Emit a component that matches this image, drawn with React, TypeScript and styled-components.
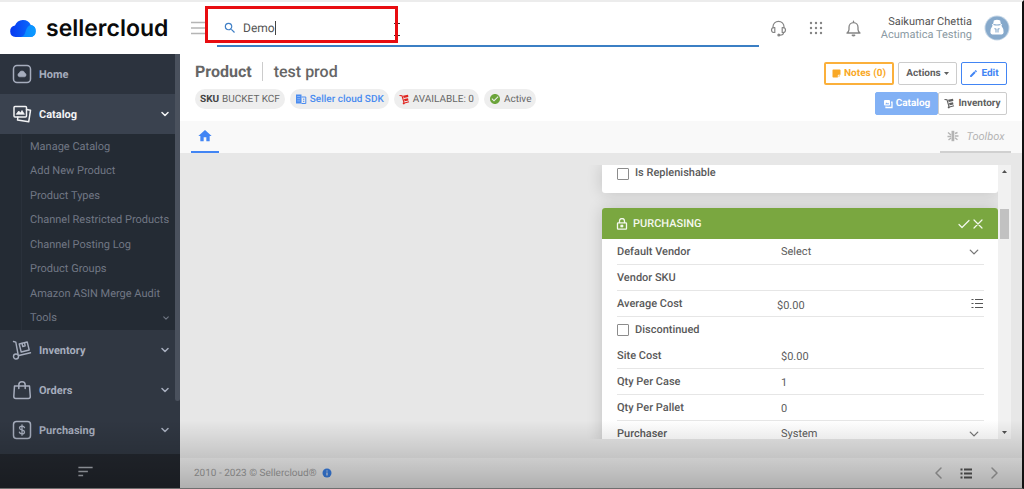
import React from "react";
import styled, { createGlobalStyle, css } from "styled-components";
import {
  MdSearch,
  MdHome,
  MdCheckCircle,
  MdEdit,
  MdSort,
} from "react-icons/md";

const GlobalStyle = createGlobalStyle`
  *, *::before, *::after { box-sizing: border-box; }
  body {
    margin: 0;
    background: #fff;
    font-family: Roboto, "Liberation Sans", sans-serif;
    font-size: 11px;
    color: #5c5c5c;
    text-rendering: geometricPrecision;
  }
  button, input, select { font: inherit; color: inherit; text-rendering: inherit; }
  svg { display: block; flex: none; }
`;

/* ---------- shell ---------- */

const Shell = styled.div`
  position: relative;
  display: flex;
  flex-direction: column;
  height: 100vh;
  overflow: hidden;
  border-top: 2px solid #ececec;
  border-right: 2px solid #111;
  border-bottom: 1px solid #6f6f6f;
`;

const Body = styled.div`
  display: flex;
  flex: 1;
  min-height: 0;
`;

const BottomShade = styled.div`
  position: absolute;
  left: 0;
  right: 0;
  bottom: 0;
  height: 68px;
  pointer-events: none;
  background: linear-gradient(rgba(0, 0, 0, 0), rgba(0, 0, 0, 0.27));
`;

/* ---------- top bar ---------- */

const TopBar = styled.header`
  display: flex;
  flex: none;
  align-items: center;
  height: 52px;
  padding-right: 12px;
`;

const Brand = styled.a`
  display: flex;
  align-items: center;
  gap: 9px;
  width: 191px;
  padding-left: 9px;
  color: #0b0b0b;
  font: 600 23px/28px Inter, "Liberation Sans", sans-serif;
  text-decoration: none;
`;

const IconButton = styled.button`
  display: flex;
  align-items: center;
  justify-content: center;
  padding: 0;
  border: 0;
  background: none;
  color: inherit;
`;

const SearchBox = styled.label`
  position: relative;
  display: flex;
  flex: 1;
  align-items: center;
  gap: 6px;
  height: 45px;
  margin: 0 11px 0 10px;
  padding: 8px 0 0 6px;
  border-bottom: 2px solid #3b7fc4;
  align-self: flex-start;
  color: #3f7fc6;
`;

const SearchInput = styled.input`
  field-sizing: content;
  height: 14px;
  padding: 0;
  border: 0;
  border-right: 1px solid #444;
  outline: 0;
  background: none;
  color: #555;
  font-size: 12px;
`;

const SearchHighlight = styled.div`
  position: absolute;
  top: 4px;
  left: -12px;
  width: 193px;
  height: 37px;
  border: 3px solid #e80c10;
  pointer-events: none;
`;

const TextCursor = styled.svg`
  position: absolute;
  top: 21px;
  left: 177px;
`;

const TopActions = styled.div`
  display: flex;
  align-items: center;
  gap: 22px;
  color: #858585;
`;

const Account = styled.div`
  display: flex;
  align-items: center;
  gap: 12px;
  padding-left: 19px;
`;

const AccountName = styled.div`
  color: #555;
  line-height: 13px;
  text-align: right;
`;

const AccountOrg = styled.div`
  color: #8b9aa3;
`;

/* ---------- side bar ---------- */

const SideBar = styled.nav`
  position: relative;
  display: flex;
  flex: none;
  flex-direction: column;
  width: 180px;
  background: #303742;
`;

const SideScroll = styled.div`
  flex: 1;
  min-height: 0;
  overflow: hidden;
`;

const SideThumb = styled.div`
  position: absolute;
  top: 0;
  right: 0;
  width: 5px;
  height: 347px;
  border-radius: 0 0 3px 3px;
  background: #4a515d;
`;

const SideItem = styled.a<{ $open?: boolean; $first?: boolean }>`
  display: flex;
  align-items: center;
  gap: 7px;
  height: 40px;
  padding: 0 11px 0 12px;
  background: ${(p) => (p.$open ? "#3a424f" : p.$first ? "#2c333e" : "transparent")};
  color: ${(p) => (p.$open ? "#f2f3f5" : "#a6adbd")};
  font-size: 11px;
  font-weight: 700;
  text-decoration: none;
`;

const SideLabel = styled.span`
  flex: 1;
`;

const SubMenu = styled.div`
  display: grid;
  grid-auto-rows: 1fr;
  height: 196px;
  padding: 0 11px 0 30px;
  background: linear-gradient(90deg, #242b34 21px, #2a313b 21px, #2a313b 22px, #242b34 22px);
`;

const SubItem = styled.a`
  display: flex;
  align-items: center;
  justify-content: space-between;
  color: #717784;
  white-space: nowrap;
  text-decoration: none;
`;

const SideFooter = styled.button`
  display: flex;
  flex: none;
  align-items: center;
  justify-content: center;
  height: 34px;
  padding: 0 10px 0 0;
  border: 0;
  background: #23272e;
  color: #a7abb3;
`;

/* ---------- page header ---------- */

const Main = styled.main`
  display: flex;
  flex: 1;
  flex-direction: column;
  min-width: 0;
  background: #e7e7e7;
`;

const PageHead = styled.div`
  display: flex;
  justify-content: space-between;
  padding: 8px 15px 6px;
  background: #fff;
`;

const Stack = styled.div<{ $end?: boolean }>`
  display: flex;
  flex-direction: column;
  align-items: ${(p) => (p.$end ? "flex-end" : "flex-start")};
  gap: ${(p) => (p.$end ? 7 : 8)}px;
`;

const Title = styled.h1`
  display: flex;
  align-items: center;
  margin: 0;
  color: #666;
  font-size: 16px;
  font-weight: 700;
  line-height: 19px;
`;

const TitleName = styled.span`
  margin-left: 10px;
  padding-left: 11px;
  border-left: 1px solid #ccc;
  font-weight: 500;
`;

const PillRow = styled.div`
  display: flex;
  gap: 5px;
`;

const Pill = styled.span<{ $link?: boolean }>`
  display: flex;
  align-items: center;
  gap: 3px;
  height: 20px;
  padding: 0 5px;
  border-radius: 10px;
  background: #eee;
  color: ${(p) => (p.$link ? "#4a8cf0" : "#666")};
  font-size: 10px;
  font-weight: ${(p) => (p.$link ? 500 : 400)};
  white-space: nowrap;

  b {
    color: #444;
  }
`;

const ButtonRow = styled.div<{ $joined?: boolean }>`
  display: flex;
  gap: ${(p) => (p.$joined ? 0 : 4)}px;
`;

const tones = {
  amber: css`
    border: 2px solid #fbb03b;
    background: #fff;
    color: #f9a825;
  `,
  plain: css`
    border: 1px solid #ccc;
    background: #fff;
    color: #5f5f5f;
  `,
  blue: css`
    border: 1px solid #4285f4;
    background: #fff;
    color: #4285f4;
  `,
  filled: css`
    border: 1px solid #82b1f5;
    background: #82b1f5;
    color: #fff;
  `,
};

const Button = styled.button<{ $tone: keyof typeof tones; $width: number }>`
  display: flex;
  align-items: center;
  justify-content: center;
  gap: 3px;
  min-width: ${(p) => p.$width}px;
  height: 23px;
  padding: 0;
  border-radius: 2px;
  font-size: 10px;
  font-weight: 700;
  white-space: nowrap;
  ${(p) => tones[p.$tone]}
`;

const TabBar = styled.div`
  display: flex;
  justify-content: space-between;
  height: 32px;
  padding: 0 11px;
  background: #f9f9f9;
`;

const Tab = styled.button<{ $active?: boolean }>`
  display: flex;
  align-items: center;
  justify-content: center;
  gap: 8px;
  min-width: ${(p) => (p.$active ? 28 : 71)}px;
  padding: 0;
  border: 0;
  border-bottom: 2px solid ${(p) => (p.$active ? "#4285f4" : "#d0d0d0")};
  background: none;
  color: ${(p) => (p.$active ? "#4285f4" : "#b4b4b4")};
  font-style: italic;
`;

/* ---------- content ---------- */

const Content = styled.div`
  display: grid;
  grid-template-columns: 1fr 1fr;
  grid-template-rows: minmax(0, 1fr);
  flex: 1;
  min-height: 0;
  padding: 12px 11px 19px 13px;
`;

const ScrollPane = styled.div`
  display: flex;
  grid-column: 2;
  margin-left: -16px;
  padding-left: 16px;
  overflow: hidden;
`;

const Cards = styled.div`
  display: flex;
  flex: 1;
  flex-direction: column;
  gap: 15px;
`;

const Card = styled.section<{ $tail?: boolean }>`
  flex: none;
  padding-bottom: ${(p) => (p.$tail ? 13 : 0)}px;
  border-radius: ${(p) => (p.$tail ? "0 0 3px 3px" : "3px")};
  background: #fff;
  box-shadow: 0 0 16px rgba(0, 0, 0, 0.16);
`;

const CardHead = styled.header`
  display: flex;
  align-items: center;
  gap: 5px;
  height: 31px;
  padding: 0 14px;
  border-radius: 3px 3px 0 0;
  background: #7aa740;
  color: #f4f8ee;
`;

const CardTitle = styled.h2`
  flex: 1;
  margin: 0;
  font-size: 11px;
  font-weight: 500;
`;

const CardTools = styled.div`
  display: flex;
  gap: 2px;
`;

const Row = styled.div`
  display: flex;
  align-items: center;
  height: 26px;
  margin: 0 14px 0 15px;
  border-bottom: 1px solid #e6e6e6;
`;

const Label = styled.label`
  width: 164px;
  color: #595959;
  font-weight: 500;
`;

const ValueInput = styled.input<{ $pulled?: boolean }>`
  flex: 1;
  min-width: 0;
  height: 25px;
  margin-left: ${(p) => (p.$pulled ? -4 : 0)}px;
  padding: ${(p) => (p.$pulled ? 4 : 2)}px 0 0;
  border: 0;
  outline: 0;
  background: none;
`;

const ValueSelect = styled.select`
  flex: 1;
  min-width: 0;
  height: 25px;
  padding: 0;
  border: 0;
  appearance: none;
  background: none;
`;

const SelectMark = styled.span`
  padding-right: 5px;
  color: #777;
`;

const CheckRow = styled.label<{ $short?: boolean }>`
  display: flex;
  align-items: center;
  gap: 6px;
  height: ${(p) => (p.$short ? 15 : 26)}px;
  margin: 0 15px;
  padding-bottom: ${(p) => (p.$short ? 0 : 2)}px;
  color: #595959;
  font-weight: 500;
`;

const CheckBox = styled.input`
  width: 12px;
  height: 12px;
  margin: 2px 0 0;
  border: 1px solid #8c8c8c;
  border-radius: 1px;
  appearance: none;
  background: #fff;
`;

const Scrollbar = styled.div`
  display: flex;
  flex-direction: column;
  justify-content: space-between;
  align-items: center;
  width: 13px;
  padding: 5px 0;
  background: #f1f1f1;
  color: #505050;
`;

const ScrollThumb = styled.div`
  width: 9px;
  height: 30px;
  margin: 36px 0 auto;
  background: #c1c1c1;
`;

const Footer = styled.footer`
  display: flex;
  flex: none;
  align-items: center;
  gap: 5px;
  height: 30px;
  padding: 0 22px 0 14px;
  background: #f1f1f1;
  color: #a3a3a3;
  font-size: 10px;
`;

const Pager = styled.div`
  display: flex;
  align-items: center;
  gap: 15px;
  margin-left: auto;
`;

/* ---------- icons ---------- */

const Line = ({
  size,
  box = 20,
  width = 1.5,
  children,
}: {
  size: number;
  box?: number;
  width?: number;
  children: React.ReactNode;
}) => (
  <svg
    width={size}
    height={size}
    viewBox={`0 0 ${box} ${box}`}
    fill="none"
    stroke="currentColor"
    strokeWidth={width}
    strokeLinecap="round"
    strokeLinejoin="round"
    aria-hidden="true"
  >
    {children}
  </svg>
);

const CloudLogo = () => (
  <svg width="28" height="19" viewBox="0 0 28 19" aria-hidden="true">
    <defs>
      <linearGradient id="cloudBack" x1="0" x2="1">
        <stop offset="0" stopColor="#0838f0" />
        <stop offset="1" stopColor="#0a74ff" />
      </linearGradient>
      <linearGradient id="cloudFront" x1="0" x2="1">
        <stop offset="0" stopColor="#0a84ff" />
        <stop offset="1" stopColor="#0c9bff" />
      </linearGradient>
    </defs>
    <path d="M6.500 18a5.800 5.800 0 0 1-.5-11.500A8.600 8.600 0 0 1 21.800 6 6.100 6.100 0 0 1 21.500 18z" fill="url(#cloudBack)" />
    <path d="M12 18c3.200-.8 4-3.200 4.800-6.200.9-3.400 3-5.400 5-5.800A6.100 6.100 0 0 1 21.500 18z" fill="url(#cloudFront)" />
  </svg>
);

const Chevron = ({ size = 8 }: { size?: number }) => (
  <Line size={size} box={8} width={size > 8 ? 1.1 : 1.5}>
    <path d="M1 2.500l3 3 3-3" />
  </Line>
);

const HomeIcon = () => (
  <Line size={20}>
    <rect x="1.500" y="1.500" width="17" height="17" rx="3.500" />
    <path d="M7.200 12.700a1.900 1.900 0 0 1 0-3.600 2.900 2.900 0 0 1 5.600 0 1.900 1.900 0 0 1 0 3.600z" fill="currentColor" strokeWidth="0.600" />
  </Line>
);

const CatalogIcon = () => (
  <Line size={20}>
    <rect x="2" y="2.500" width="12.500" height="10.500" rx="1" />
    <path d="M4.500 10l2.200-3 1.800 2 1.500-2.500 2.200 3.500z" fill="currentColor" strokeWidth="0.800" />
    <path d="M14.500 5.500l4 .8-1.800 11.500L5.500 16l.4-3" />
  </Line>
);

const InventoryIcon = () => (
  <Line size={20} width={1.4}>
    <path d="M1.500 1.500l2.300.7L6 14M6.800 15.500l11.700-2.700" />
    <circle cx="4" cy="16.500" r="2.500" />
    <path d="M7.200 4l8-2 2 8-8 2z" />
    <path d="M10 3.500l.8 3 2.400-.6-.7-3" />
  </Line>
);

const OrdersIcon = () => (
  <Line size={20}>
    <path d="M2.500 6h15l.8 10.500a2 2 0 0 1-2 2H3.800a2 2 0 0 1-2-2z" />
    <path d="M6.800 8.500V5a3.200 3.200 0 0 1 6.400 0v3.500" />
  </Line>
);

const PurchasingIcon = () => (
  <Line size={20}>
    <rect x="1.500" y="1.500" width="17" height="17" rx="3" />
    <path d="M12.500 7.700c-.3-1-1.300-1.500-2.500-1.500s-2.500.6-2.500 1.900c0 2.600 5 1.200 5 3.800 0 1.300-1.200 1.900-2.500 1.900s-2.300-.6-2.600-1.600M10 4.800v10.400" strokeWidth="1.300" />
  </Line>
);

const HeadsetIcon = () => (
  <Line size={17} box={17} width={1.200}>
    <path d="M3 8V6.800a5.500 5.500 0 0 1 11 0V8" />
    <path d="M4.800 7.500v5H4a2.500 2.500 0 0 1 0-5zM12.200 7.500v5h.8a2.500 2.500 0 0 0 0-5z" />
    <path d="M13.500 12.500c0 2-1.500 2.700-3.700 2.700" />
    <circle cx="8.800" cy="15" r="0.900" fill="currentColor" />
  </Line>
);

const AppsIcon = () => (
  <svg width="14" height="14" viewBox="0 0 14 14" fill="currentColor" aria-hidden="true">
    {[2, 7, 12].map((y) => [2, 7, 12].map((x) => <circle key={`${x}-${y}`} cx={x} cy={y} r="1.200" />))}
  </svg>
);

const BellIcon = () => (
  <Line size={17} box={17} width={1.300}>
    <path d="M2 13h13c-1.300-1-2-2-2-3.500V7.200a4.500 4.500 0 0 0-9 0v2.300C4 11 3.300 12 2 13zM8.500 2.500V1.200" />
    <path d="M7.200 15.200a1.500 1.500 0 0 0 2.600 0z" fill="currentColor" />
  </Line>
);

const Avatar = () => (
  <svg width="26" height="26" viewBox="0 0 26 26" aria-label="Profile picture">
    <circle cx="13" cy="13" r="12.500" fill="#c5d6e6" />
    <circle cx="13" cy="13" r="11.500" fill="#86a9cb" />
    <path d="M9.800 5.500q3.200-1.500 6.400 0l.6 3.300 1.400.7-.8 1.300q2.300 2.500 2.200 6.700-.3 2-2 2H8.400q-1.700 0-2-2-.1-4.200 2.200-6.700l-.8-1.300 1.400-.7z" fill="#fff" />
    <path d="M9.500 9.500q3.500 1 7 0M10.500 13.500l1.500.7v3.300M15.500 13.500l-1.500.7v3.300" stroke="#86a9cb" strokeWidth="1.100" fill="none" />
  </svg>
);

const BuildingIcon = () => (
  <svg width="12" height="12" viewBox="0 0 12 12" aria-hidden="true">
    <path d="M1 1.500h5.500v9H1z" fill="#4a8cf0" />
    <path d="M2.200 3.500h3M2.200 5.700h3M2.200 7.900h3" stroke="#a9c9fa" strokeWidth="0.700" />
    <path d="M6.500 4h4.300v6.500H6.500M8 6.200h1.300M8 8.300h1.300" stroke="#4a8cf0" fill="none" />
  </svg>
);

const NoteIcon = () => (
  <svg width="9" height="9" viewBox="0 0 9 9" fill="currentColor" aria-hidden="true">
    <path d="M1.200.5h6.600q.7 0 .7.700v4.600H6.500q-.7 0-.7.700v2H1.200q-.7 0-.7-.7V1.200q0-.7.700-.7zM6.600 8.300V6.600h1.700z" />
  </svg>
);

const InfoIcon = () => (
  <svg width="10" height="10" viewBox="0 0 10 10" aria-hidden="true">
    <circle cx="5" cy="5" r="4.500" fill="#3b82e8" />
    <path d="M5 4.500v3M5 2.400v1.200" stroke="#e4ecf6" strokeWidth="1.200" />
  </svg>
);

const TrolleyIcon = ({ color = "currentColor" }: { color?: string }) => (
  <svg width="11" height="11" viewBox="0 0 11 11" aria-hidden="true">
    <path d="M.5 1.500l2.500.3 2 6.700M5.500 9L10 7.800" stroke={color} strokeWidth="1.100" fill="none" />
    <path d="M4 1.800l5-1 .4 2.200-4.700 1zM5 5l4-.8.5 2.200-3.900.9z" fill={color} />
    <circle cx="4.800" cy="9.300" r="1.100" fill={color} />
  </svg>
);

const CopiesIcon = () => (
  <svg width="10" height="10" viewBox="0 0 10 10" aria-hidden="true">
    <rect x="1" y="1" width="6" height="5.500" rx="1" fill="currentColor" />
    <path d="M8 3.200h1v5.300H3V7.500" stroke="currentColor" strokeWidth="1.300" fill="none" />
    <path d="M2.200 5.300l1.300-1.800 1 1 .8-.8.800 1.600z" fill="#82b1f5" />
  </svg>
);

const ToolboxIcon = () => (
  <svg width="12" height="12" viewBox="0 0 12 12" aria-hidden="true">
    <path d="M4.500.8h2.800v10.400H4.500z" fill="currentColor" />
    <path d="M1 2.500l3 2.500M.5 6.500h3.500M1.500 10L4 8M8 3.500l2.500-1M8 6h3.500M8 7.800l2.500 2" stroke="currentColor" strokeWidth="1.400" fill="none" />
  </svg>
);

const LockIcon = () => (
  <Line size={12} box={12} width={1.300}>
    <rect x="1.500" y="4.800" width="9" height="6.400" rx="0.600" />
    <path d="M3.500 4.500V3a2.500 2.500 0 0 1 5 0v1.500" />
    <rect x="5" y="7" width="2" height="2" fill="currentColor" strokeWidth="0.600" />
  </Line>
);

const ListIcon = ({ bold }: { bold?: boolean }) => (
  <svg width="13" height="11" viewBox="0 0 13 11" stroke="#555" aria-hidden="true">
    <path
      d="M0.500 1.500h2M4 1.500H12M0.500 5.500h2M4 5.500H12M0.500 9.500h2M4 9.500H12"
      strokeWidth={bold ? 2 : 1.200}
    />
  </svg>
);

const Triangle = ({ down }: { down?: boolean }) => (
  <svg width="5" height="3" viewBox="0 0 5 3" fill="currentColor" aria-hidden="true">
    <path d={down ? "M0 0h5L2.500 3z" : "M0 3h5L2.500 0z"} />
  </svg>
);

/* ---------- data ---------- */

const catalogLinks = [
  "Manage Catalog",
  "Add New Product",
  "Product Types",
  "Channel Restricted Products",
  "Channel Posting Log",
  "Product Groups",
  "Amazon ASIN Merge Audit",
];

const lowerSections = [
  { label: "Inventory", icon: <InventoryIcon /> },
  { label: "Orders", icon: <OrdersIcon /> },
  { label: "Purchasing", icon: <PurchasingIcon /> },
];

const SelectRow = ({ id, label, value }: { id: string; label: string; value: string }) => (
  <Row>
    <Label htmlFor={id}>{label}</Label>
    <ValueSelect id={id} defaultValue={value}>
      <option>{value}</option>
    </ValueSelect>
    <SelectMark>
      <Chevron size={10} />
    </SelectMark>
  </Row>
);

const InputRow = ({
  id,
  label,
  value,
  pulled,
  children,
}: {
  id: string;
  label: string;
  value: string;
  pulled?: boolean;
  children?: React.ReactNode;
}) => (
  <Row>
    <Label htmlFor={id}>{label}</Label>
    <ValueInput id={id} defaultValue={value} $pulled={pulled} />
    {children}
  </Row>
);

export default function App() {
  return (
    <Shell>
      <GlobalStyle />
      <TopBar>
        <Brand href="#">
          <CloudLogo />
          sellercloud
        </Brand>
        <IconButton aria-label="Toggle menu">
          <svg width="16" height="14" viewBox="0 0 16 14" stroke="#b5b5b5" strokeWidth="1.500" aria-hidden="true">
            <path d="M0 1.500h16M0 7h16M0 12.500h16" />
          </svg>
        </IconButton>
        <SearchBox>
          <MdSearch size={14} />
          <SearchInput aria-label="Search" defaultValue="Demo" />
          <TextCursor width="6" height="13" viewBox="0 0 6 13" stroke="#333" fill="none" aria-hidden="true">
            <path d="M0 .5h6M0 12.500h6M3 .5v12" />
          </TextCursor>
          <SearchHighlight />
        </SearchBox>
        <TopActions>
          <IconButton aria-label="Support">
            <HeadsetIcon />
          </IconButton>
          <IconButton aria-label="Apps">
            <AppsIcon />
          </IconButton>
          <IconButton aria-label="Notifications">
            <BellIcon />
          </IconButton>
        </TopActions>
        <Account>
          <AccountName>
            Saikumar Chettia
            <AccountOrg>Acumatica Testing</AccountOrg>
          </AccountName>
          <Avatar />
        </Account>
      </TopBar>

      <Body>
        <SideBar>
          <SideScroll>
            <SideItem href="#" $first>
              <HomeIcon />
              <SideLabel>Home</SideLabel>
            </SideItem>
            <SideItem href="#" $open>
              <CatalogIcon />
              <SideLabel>Catalog</SideLabel>
              <Chevron />
            </SideItem>
            <SubMenu>
              {catalogLinks.map((text) => (
                <SubItem href="#" key={text}>
                  {text}
                </SubItem>
              ))}
              <SubItem href="#">
                Tools
                <Chevron size={6} />
              </SubItem>
            </SubMenu>
            {lowerSections.map((s) => (
              <SideItem href="#" key={s.label}>
                {s.icon}
                <SideLabel>{s.label}</SideLabel>
                <Chevron />
              </SideItem>
            ))}
          </SideScroll>
          <SideFooter aria-label="Collapse menu">
            <MdSort size={19} />
          </SideFooter>
          <SideThumb />
        </SideBar>

        <Main>
          <PageHead>
            <Stack>
              <Title>
                Product
                <TitleName>test prod</TitleName>
              </Title>
              <PillRow>
                <Pill>
                  <b>SKU</b>BUCKET KCF
                </Pill>
                <Pill $link>
                  <BuildingIcon />
                  Seller cloud SDK
                </Pill>
                <Pill>
                  <TrolleyIcon color="#e0241f" />
                  AVAILABLE: 0
                </Pill>
                <Pill>
                  <MdCheckCircle size={12} color="#6ba43a" />
                  Active
                </Pill>
              </PillRow>
            </Stack>
            <Stack $end>
              <ButtonRow>
                <Button $tone="amber" $width={70}>
                  <NoteIcon />
                  Notes (0)
                </Button>
                <Button $tone="plain" $width={59}>
                  Actions
                  <Triangle down />
                </Button>
                <Button $tone="blue" $width={46}>
                  <MdEdit size={9} />
                  Edit
                </Button>
              </ButtonRow>
              <ButtonRow $joined>
                <Button $tone="filled" $width={63}>
                  <CopiesIcon />
                  Catalog
                </Button>
                <Button $tone="plain" $width={69}>
                  <TrolleyIcon />
                  Inventory
                </Button>
              </ButtonRow>
            </Stack>
          </PageHead>

          <TabBar>
            <Tab $active aria-label="Overview">
              <MdHome size={16} />
            </Tab>
            <Tab>
              <ToolboxIcon />
              Toolbox
            </Tab>
          </TabBar>

          <Content>
            <ScrollPane>
              <Cards>
                <Card $tail>
                  <CheckRow $short>
                    <CheckBox type="checkbox" />
                    Is Replenishable
                  </CheckRow>
                </Card>
                <Card>
                  <CardHead>
                    <LockIcon />
                    <CardTitle>PURCHASING</CardTitle>
                    <CardTools>
                      <IconButton aria-label="Save">
                        <Line size={12} box={12} width={1.200}>
                          <path d="M1 6.500L4 9.500 11 2.500" />
                        </Line>
                      </IconButton>
                      <IconButton aria-label="Cancel">
                        <Line size={12} box={12} width={1.200}>
                          <path d="M2 2l8 8M10 2l-8 8" />
                        </Line>
                      </IconButton>
                    </CardTools>
                  </CardHead>
                  <SelectRow id="vendor" label="Default Vendor" value="Select" />
                  <InputRow id="vendor-sku" label="Vendor SKU" value="" />
                  <InputRow id="average-cost" label="Average Cost" value="$0.00" pulled>
                    <IconButton aria-label="Cost details">
                      <ListIcon />
                    </IconButton>
                  </InputRow>
                  <CheckRow>
                    <CheckBox type="checkbox" />
                    Discontinued
                  </CheckRow>
                  <InputRow id="site-cost" label="Site Cost" value="$0.00" />
                  <InputRow id="qty-case" label="Qty Per Case" value="1" />
                  <InputRow id="qty-pallet" label="Qty Per Pallet" value="0" />
                  <SelectRow id="purchaser" label="Purchaser" value="System" />
                </Card>
              </Cards>
              <Scrollbar>
                <Triangle />
                <ScrollThumb />
                <Triangle down />
              </Scrollbar>
            </ScrollPane>
          </Content>

          <Footer>
            2010 - 2023 © Sellercloud®
            <InfoIcon />
            <Pager>
              <IconButton aria-label="Previous">
                <Line size={12} box={12} width={1.500}>
                  <path d="M8 1L3 6l5 5" />
                </Line>
              </IconButton>
              <IconButton aria-label="List">
                <ListIcon bold />
              </IconButton>
              <IconButton aria-label="Next">
                <Line size={12} box={12} width={1.500}>
                  <path d="M4 1l5 5-5 5" />
                </Line>
              </IconButton>
            </Pager>
          </Footer>
        </Main>
      </Body>
      <BottomShade />
    </Shell>
  );
}
